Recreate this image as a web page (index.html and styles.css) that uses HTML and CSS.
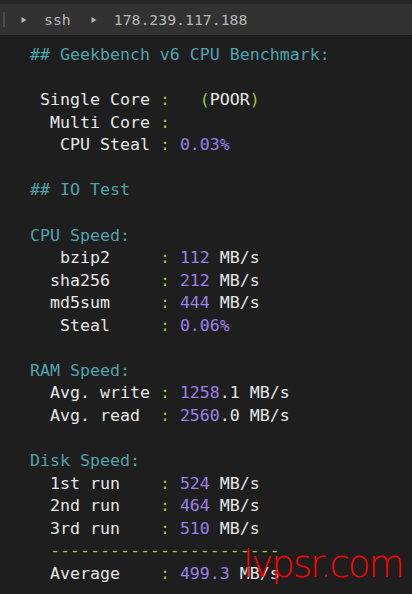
FILE: index.html
```html
<!DOCTYPE html>
<html>
<head>
<meta charset="utf-8">
<link rel="stylesheet" href="styles.css">
</head>
<body>
<div class="top-strip"></div>
<div class="crumbs">
  <span class="edge"></span>
  <svg class="arrow" width="6" height="8" viewBox="0 0 6 8"><path d="M0.5 1 L5.5 4 L0.5 7 Z" fill="#b4b4b4"/></svg>
  <span class="crumb">ssh</span>
  <svg class="arrow" width="6" height="8" viewBox="0 0 6 8"><path d="M0.5 1 L5.5 4 L0.5 7 Z" fill="#b4b4b4"/></svg>
  <span class="crumb">178.239.117.188</span>
</div>
<pre class="term"><span class="h">## Geekbench v6 CPU Benchmark:</span>

 Single Core <span class="c">:</span>   <span class="c">(</span>POOR<span class="c">)</span>
  Multi Core <span class="c">:</span>
   CPU Steal <span class="c">:</span> <span class="n">0.03%</span>

<span class="h">## IO Test</span>

<span class="h">CPU Speed:</span>
   bzip2     <span class="c">:</span> <span class="n">112</span> MB/s
  sha256     <span class="c">:</span> <span class="n">212</span> MB/s
  md5sum     <span class="c">:</span> <span class="n">444</span> MB/s
   Steal     <span class="c">:</span> <span class="n">0.06%</span>

<span class="h">RAM Speed:</span>
  Avg. write <span class="c">:</span> <span class="n">1258</span>.1 MB/s
  Avg. read  <span class="c">:</span> <span class="n">2560</span>.0 MB/s

<span class="h">Disk Speed:</span>
  1st run    <span class="c">:</span> <span class="n">524</span> MB/s
  2nd run    <span class="c">:</span> <span class="n">464</span> MB/s
  3rd run    <span class="c">:</span> <span class="n">510</span> MB/s
  <span class="c">-----------------------</span>
  Average    <span class="c">:</span> <span class="n">499.3</span> MB/s</pre>
<div class="watermark">lvpsr.com</div>
</body>
</html>
```

FILE: styles.css
```css
html, body {
  margin: 0;
  padding: 0;
  background: #1e1e1e;
  height: 100%;
  overflow: hidden;
}
body {
  position: relative;
  font-family: "DejaVu Sans Mono", "Liberation Mono", monospace;
}
.top-strip {
  height: 4px;
  background: #252526;
}
.crumbs {
  height: 31px;
  background: #323232;
  display: flex;
  align-items: center;
  color: #b8b8b8;
  font-size: 14.8px;
}
.edge {
  width: 2px;
  height: 15px;
  background: #4a4a4a;
  margin-left: 3px;
  margin-right: 16px;
}
.arrow {
  display: block;
  margin-right: 17px;
}
.crumb {
  margin-right: 20px;
}
.term {
  margin: 0;
  padding: 9px 0 0 30px;
  font-family: "DejaVu Sans Mono", "Liberation Mono", monospace;
  font-size: 16.6px;
  line-height: 22.57px;
  color: #e6e6e6;
}
.h { color: #4fa3ad; }
.c { color: #9fc43c; }
.n { color: #9a80e8; }
.watermark {
  position: absolute;
  left: 243px;
  top: 546px;
  line-height: 1;
  font-family: "DejaVu Sans", sans-serif;
  font-weight: 200;
  font-size: 37px;
  color: #ff0000;
  letter-spacing: -2px;
}
```
